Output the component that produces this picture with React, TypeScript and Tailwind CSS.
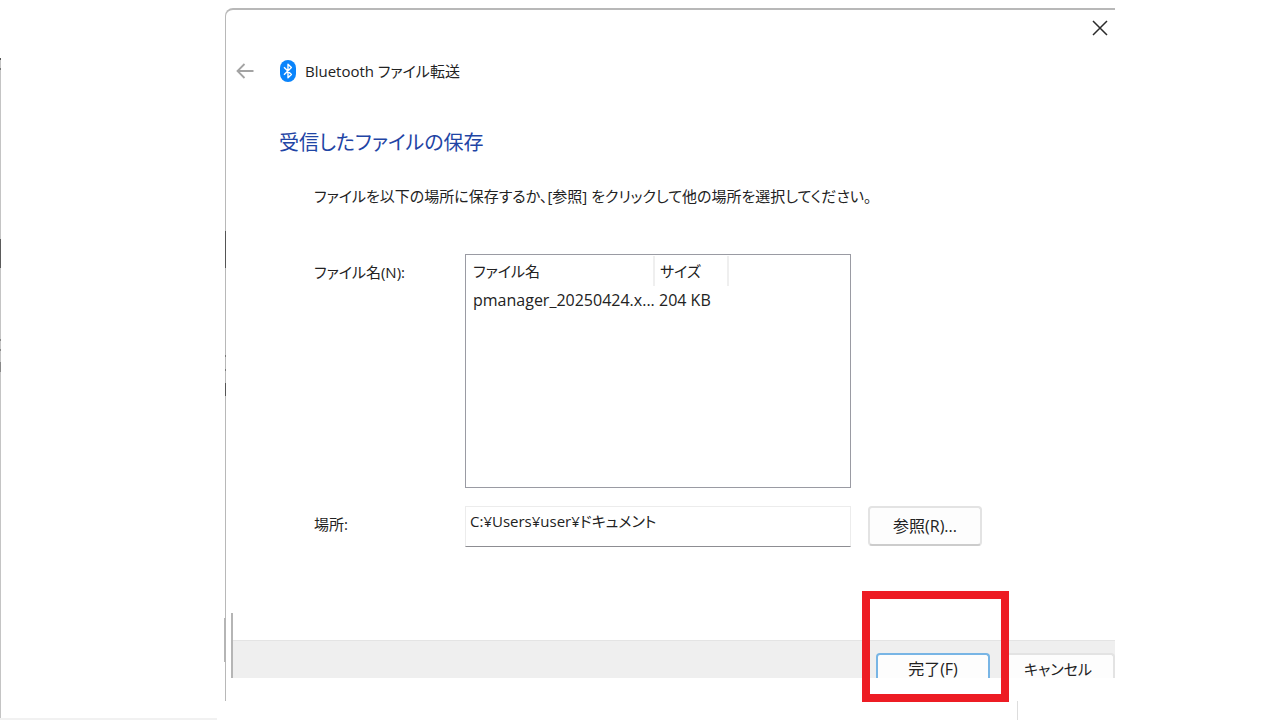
import { useState } from 'react';

interface ReceivedFile {
  name: string;
  size: string;
}

const files: ReceivedFile[] = [{ name: 'pmanager_20250424.x...', size: '204 KB' }];

function BluetoothIcon() {
  return (
    <svg width="18" height="24" viewBox="0 0 18 24" aria-hidden="true">
      <rect x="1" y="1" width="16" height="22" rx="8" fill="#0a84fb" />
      <path
        d="M5 8.2 12.4 15.6 9 18.8V5.2L12.4 8.4 5 15.8"
        fill="none"
        stroke="#fff"
        strokeWidth="1.4"
        strokeLinejoin="round"
      />
    </svg>
  );
}

/**
 * 背面ウィンドウの左端
 */
function BackEdge() {
  return (
    <div className="flex w-[217px] shrink-0 flex-col border-b-2 border-[#f1f1f1] pt-[58px]">
      <div className="flex w-px flex-1 flex-col bg-[#c4c4c4]">
        <span className="h-[2px] bg-[#555555]" />
        <span className="mt-2 h-[2px] bg-[#777777]" />
        <span className="mt-[169px] h-[29px] bg-[#5b5b5b]" />
        <span className="mt-[71px] h-[2px] bg-[#888888]" />
        <span className="mt-2 h-[2px] bg-[#888888]" />
        <span className="mt-[11px] h-[10px] bg-[#888888]" />
      </div>
    </div>
  );
}

function FileTable() {
  return (
    <div className="h-[234px] border border-[#9a9ba3] bg-white pt-px">
      <table aria-labelledby="files-label" className="table-fixed border-collapse text-left">
        <thead>
          <tr className="h-[30px] text-[15px]">
            <th className="w-[188px] border-r-2 border-[#efefef] p-0 pl-[7px] font-normal">ファイル名</th>
            <th className="w-[74px] border-r-2 border-[#efefef] p-0 pl-[5px] font-normal">サイズ</th>
          </tr>
        </thead>
        <tbody>
          {files.map((file) => (
            <tr key={file.name} className="h-7 text-base">
              <td className="max-w-[188px] whitespace-nowrap p-0 pl-[7px]">{file.name}</td>
              <td className="whitespace-nowrap p-0 pl-[5px]">{file.size}</td>
            </tr>
          ))}
        </tbody>
      </table>
    </div>
  );
}

export default function App() {
  const [location, setLocation] = useState('C:¥Users¥user¥ドキュメント');

  return (
    <div className="flex min-h-screen bg-white font-['Open_Sans','Noto_Sans_CJK_JP',sans-serif] text-[15px] text-[#222222] [font-feature-settings:'palt']">
      <BackEdge />

      <main className="relative ml-2 mr-[165px] flex flex-1 flex-col pt-2">
        {/* ウィンドウ左端の影 */}
        <span className="absolute left-0 top-[231px] z-10 h-[37px] w-px bg-[#555555]" />
        <span className="absolute left-0 top-[355px] z-10 h-[2px] w-px bg-[#777777]" />
        <span className="absolute left-0 top-[369px] z-10 h-[2px] w-px bg-[#777777]" />
        <span className="absolute left-0 top-[383px] z-10 h-[13px] w-px bg-[#555555]" />
        <span className="absolute -left-px top-[618px] z-10 h-11 w-[2px] bg-[#b5b5b5]" />

        <section className="relative flex h-[670px] flex-col rounded-tl-lg border-l border-t-2 border-l-[#b8b8b8] border-t-[#b8b8b8]">
          <header className="flex flex-col">
            <button type="button" aria-label="閉じる" className="mr-[7px] mt-[10px] self-end">
              <svg width="16" height="16" viewBox="0 0 16 16" fill="none" stroke="#2b2b2b" strokeWidth="1.5">
                <path d="M1 1 15 15M15 1 1 15" />
              </svg>
            </button>
            <div className="mt-[23px] flex h-6 items-center">
              <button type="button" aria-label="戻る" className="ml-[10px]">
                <svg width="18" height="16" viewBox="0 0 18 16" fill="none" stroke="#a3a3a3" strokeWidth="1.8">
                  <path d="M17.5 8H1.5M8.5 1 1.5 8 8.5 15" />
                </svg>
              </button>
              <span className="ml-[25px] mr-2">
                <BluetoothIcon />
              </span>
              <h1 className="pt-px">Bluetooth ファイル転送</h1>
            </div>
          </header>

          <h2 className="ml-[53px] mt-[44px] text-xl leading-8 text-[#1f45a5]">受信したファイルの保存</h2>
          <p className="ml-[88px] mt-[25px] leading-6">
            ファイルを以下の場所に保存するか、[参照] をクリックして他の場所を選択してください。
          </p>

          <div className="ml-[88px] mt-[46px] grid grid-cols-[151px_minmax(0,386px)_131px] gap-y-[18px]">
            <span id="files-label" className="mt-[6px] leading-6">
              ファイル名(N):
            </span>
            <FileTable />
            <span />
            <label htmlFor="location" className="mt-[6px] leading-6">
              場所:
            </label>
            <input
              id="location"
              type="text"
              value={location}
              onChange={(e) => setLocation(e.target.value)}
              className="h-[41px] border border-[#ececec] border-b-[#8d8d92] bg-white pb-3 pl-1 outline-none"
            />
            <button
              type="button"
              className="ml-[17px] h-10 rounded border-2 border-[#e3e3e3] border-b-[#cccccc] bg-[#fdfdfd] text-base"
            >
              参照(R)...
            </button>
          </div>

          {/* フッター */}
          <div className="relative ml-[6px] mt-auto flex h-[38px] items-end justify-end gap-[11px] border-t border-[#e4e4e4] bg-[#efefef]">
            <span className="absolute -left-px bottom-0 h-[65px] w-[2px] bg-[#b5b5b5]" />
            <div className="relative">
              <button
                type="button"
                className="flex h-[25px] w-[114px] justify-center rounded-t border-2 border-b-0 border-[#78b5e5] bg-[#fdfdfd] text-base leading-7"
              >
                完了(F)
              </button>
              <span className="pointer-events-none absolute -left-[14px] -top-[62px] z-10 h-[111px] w-[147px] border-8 border-[#ed1c24]" />
            </div>
            <button
              type="button"
              className="flex h-[25px] w-[114px] justify-center rounded-t border-2 border-b-0 border-[#e3e3e3] bg-[#fdfdfd] leading-7"
            >
              キャンセル
            </button>
          </div>
        </section>

        <div className="h-[23px] border-l border-[#b8b8b8]" />
        <div className="mr-[97px] flex-1 border-r border-[#dddddd]" />
      </main>
    </div>
  );
}
